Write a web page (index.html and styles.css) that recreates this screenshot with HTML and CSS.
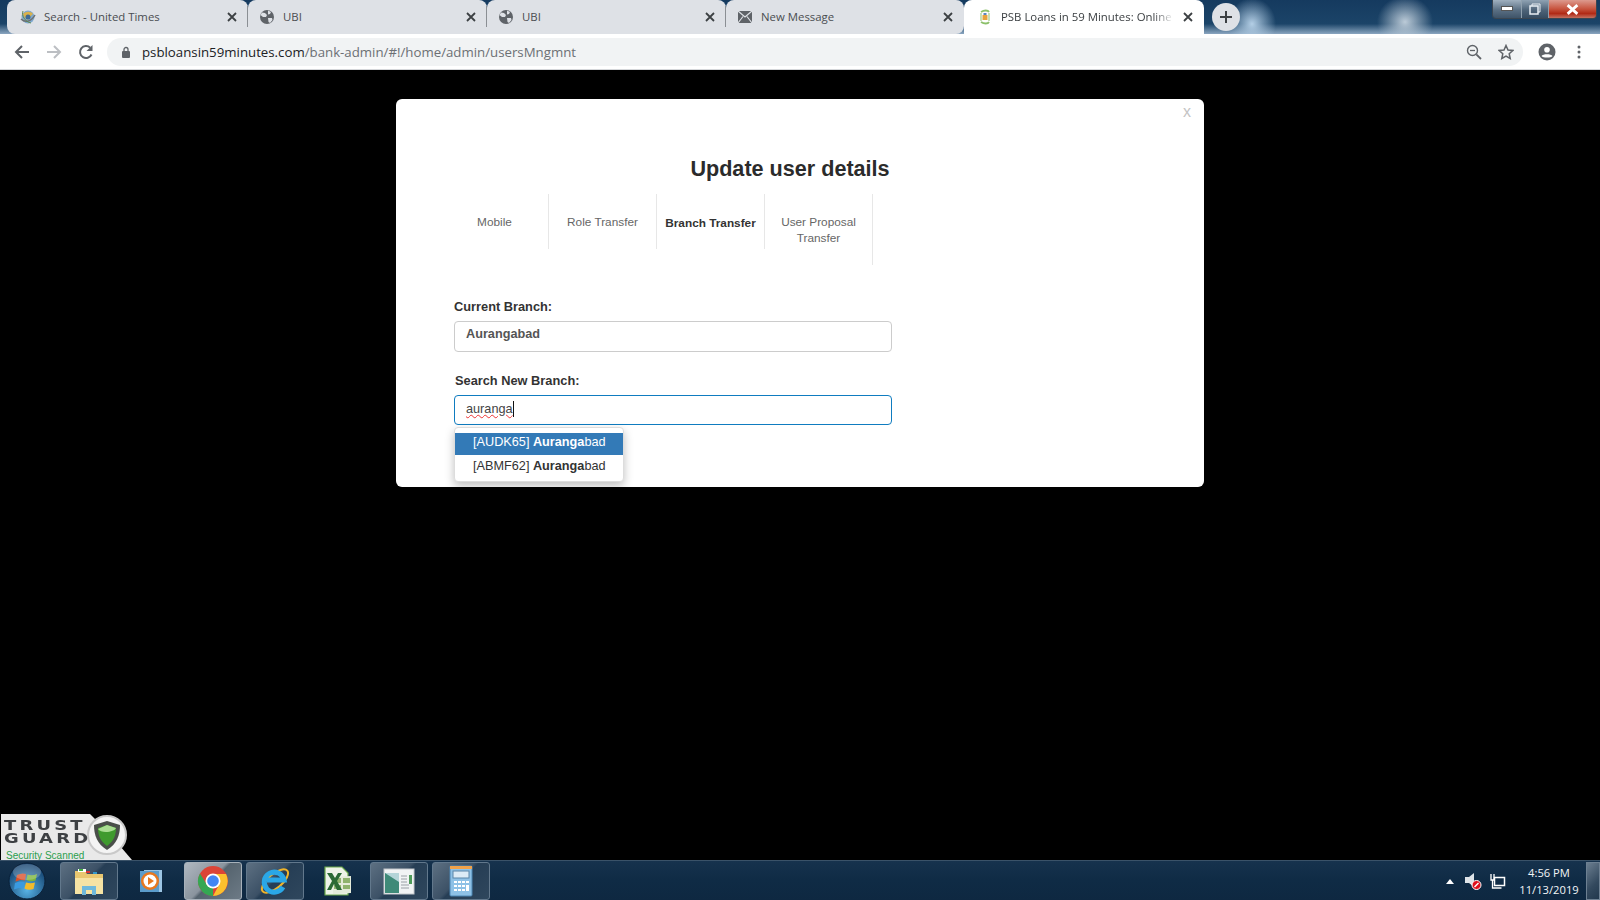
FILE: index.html
```html
<!DOCTYPE html>
<html lang="en">
<head>
	<meta charset="UTF-8">
	<title>PSB Loans in 59 Minutes</title>
	<link rel="stylesheet" href="styles.css">
</head>
<body>
	<svg class="defs" width="0" height="0">
		<symbol id="close" viewBox="0 0 12 12"><path d="M2 2l8 8M10 2l-8 8" fill="none" stroke="#3c4043" stroke-width="1.8"/></symbol>
		<symbol id="globe" viewBox="0 0 16 16"><circle cx="8" cy="8" r="7" fill="#5f6368"/><path d="M3 3.500l3 .5 2 2-1 2-3 0-2.500-2zM9 1.500l3 1.500-1 2-2 .5zM9 9l4 0 .5 2-2.500 3-1.500-1z" fill="#dee1e6"/></symbol>
	</svg>

	<div class="tabstrip">
		<div class="tab">
			<svg class="favicon" viewBox="0 0 16 16"><circle cx="8" cy="8" r="6.500" fill="#7fa9cf"/><path d="M3 5c3-3 8-3 10 0-2 1-3 4-5 6-2-1-4-3-5-6z" fill="#d9b24c"/><circle cx="8" cy="8" r="2.500" fill="#3d6a96"/><path d="M1 10c4 4 10 3 14-4" fill="none" stroke="#6d6f71" stroke-width="1.500"/><path d="M3 2c-2 4 2 11 8 12" fill="none" stroke="#5f8a4f"/></svg>
			<span class="tab-title">Search - United Times</span>
			<svg class="tab-close"><use href="#close"/></svg>
		</div>
		<div class="tab tab-b">
			<svg class="favicon"><use href="#globe"/></svg>
			<span class="tab-title">UBI</span>
			<svg class="tab-close"><use href="#close"/></svg>
		</div>
		<div class="tab tab-b">
			<svg class="favicon"><use href="#globe"/></svg>
			<span class="tab-title">UBI</span>
			<svg class="tab-close"><use href="#close"/></svg>
		</div>
		<div class="tab tab-c">
			<svg class="favicon" viewBox="0 0 16 16"><rect x="1" y="2" width="14" height="12" fill="#5f6368"/><path d="M1 2l7 6 7-6M1 14l5-6.500M15 14l-5-6.500" fill="none" stroke="#dee1e6" stroke-width="1.200"/></svg>
			<span class="tab-title">New Message</span>
			<svg class="tab-close"><use href="#close"/></svg>
		</div>
		<div class="tab tab-active">
			<svg class="favicon" viewBox="0 0 16 16"><path d="M4 3c3-2 7-2 8 0M4 13c3 2 7 2 8 0" fill="none" stroke="#8cc06a" stroke-width="1.800"/><path d="M4 4v8M12 4v8" stroke="#b7d59f" stroke-width="1.500"/><rect x="5.500" y="6" width="5" height="5" fill="#e7a33e"/><rect x="6.500" y="4" width="3" height="2" fill="#5a86c0"/></svg>
			<span class="tab-title tab-fade">PSB Loans in 59 Minutes: Online Loan</span>
			<svg class="tab-close"><use href="#close"/></svg>
		</div>
		<div class="newtab"><svg viewBox="0 0 14 14" width="14" height="14"><path d="M7 1v12M1 7h12" stroke="#3c4043" stroke-width="2"/></svg></div>
		<div class="wincontrols">
			<div class="winbtn winmin"><svg viewBox="0 0 12 6" width="12" height="6"><rect x="0.500" y="0.500" width="11" height="4" fill="#fff" stroke="#555"/></svg></div>
			<div class="winbtn winrestore"><svg viewBox="0 0 12 12" width="12" height="12"><path d="M3 3V1h8v8H9" fill="none" stroke="#e8eef3"/><rect x="1" y="3" width="8" height="8" fill="none" stroke="#e8eef3" stroke-width="1.500"/></svg></div>
			<div class="winbtn winclose"><svg viewBox="0 0 12 10" width="13" height="11"><path d="M1.500 1l9 8M10.500 1l-9 8" stroke="#fff" stroke-width="2.600"/></svg></div>
		</div>
	</div>

	<div class="toolbar">
		<div class="navbtn"><svg viewBox="0 0 16 16" width="16" height="16"><path d="M15 8H2M8 2L2 8l6 6" fill="none" stroke="#5f6368" stroke-width="2"/></svg></div>
		<div class="navbtn"><svg viewBox="0 0 16 16" width="16" height="16"><path d="M1 8h13M8 2l6 6-6 6" fill="none" stroke="#bcbfc3" stroke-width="2"/></svg></div>
		<div class="navbtn"><svg viewBox="0 0 16 16" width="16" height="16"><path d="M13.500 10.500A6 6 0 1 1 12.200 3.700" fill="none" stroke="#5f6368" stroke-width="2"/><path d="M14.500 1v6h-6z" fill="#5f6368"/></svg></div>
		<div class="omnibox">
			<svg class="lock" viewBox="0 0 10 12" width="10" height="12"><rect x="1" y="5" width="8" height="7" rx="1" fill="#5f6368"/><path d="M3 5V3.500a2 2 0 0 1 4 0V5" fill="none" stroke="#5f6368" stroke-width="1.300"/></svg>
			<span class="url"><span class="url-host">psbloansin59minutes.com</span>/bank-admin/#!/home/admin/usersMngmnt</span>
			<svg class="omni-icon" viewBox="0 0 16 16" width="16" height="16"><circle cx="6.500" cy="6.500" r="5" fill="none" stroke="#5f6368" stroke-width="1.400"/><path d="M10.300 10.300L15 15" stroke="#5f6368" stroke-width="1.800"/><path d="M4 6.500h5" stroke="#5f6368" stroke-width="1.300"/></svg>
			<svg class="omni-icon" viewBox="0 0 16 16" width="16" height="16"><path d="M8 1.500l2 4.500 4.800.5-3.600 3.200 1 4.800L8 12l-4.200 2.500 1-4.800L1.200 6.500 6 6z" fill="none" stroke="#5f6368" stroke-width="1.500"/></svg>
		</div>
		<div class="navbtn"><svg viewBox="0 0 18 18" width="18" height="18"><circle cx="9" cy="9" r="8.500" fill="#5f6368"/><circle cx="9" cy="6.800" r="2.800" fill="#fff"/><path d="M3.500 13c1.500-2.500 9.500-2.500 11 0-1.500 2-9.500 2-11 0z" fill="#fff"/></svg></div>
		<div class="navbtn"><svg viewBox="0 0 4 14" width="4" height="14"><circle cx="2" cy="2" r="1.500" fill="#5f6368"/><circle cx="2" cy="7" r="1.500" fill="#5f6368"/><circle cx="2" cy="12" r="1.500" fill="#5f6368"/></svg></div>
	</div>

	<div class="content">
		<div class="modal">
			<span class="modal-close">x</span>
			<h2 class="modal-title">Update user details</h2>
			<ul class="usertabs">
				<li class="usertab">Mobile</li>
				<li class="usertab">Role Transfer</li>
				<li class="usertab usertab-on">Branch Transfer</li>
				<li class="usertab usertab-tall">User Proposal Transfer</li>
			</ul>
			<div class="form">
				<label class="form-label">Current Branch:</label>
				<div class="field field-ro">Aurangabad</div>
				<label class="form-label form-label-b">Search New Branch:</label>
				<div class="field field-focus"><span class="typed">auranga</span></div>
				<ul class="suggest">
					<li class="suggest-item suggest-on">[AUDK65] <b>Auranga</b>bad</li>
					<li class="suggest-item">[ABMF62] <b>Auranga</b>bad</li>
				</ul>
			</div>
		</div>

		<div class="trust">
			<svg class="trust-bg" viewBox="0 0 132 46" width="132" height="46">
				<path d="M1 0H90L108 18 132 46H1z" fill="#e9e9e9"/>
				<circle cx="107" cy="21" r="19" fill="#f4f4f4" stroke="#c9c9c9" stroke-width="2"/>
				<path d="M107 7l13 4c0 10-3 19-13 25-10-6-13-15-13-25z" fill="#4a4f4a"/>
				<path d="M107 11l9 3c0 7-2 13-9 18-7-5-9-11-9-18z" fill="#3f9a2e"/>
				<path d="M98 15l9-4 9 3c-1 4-15 6-18 1z" fill="#a9dd92"/>
			</svg>
			<div class="trust-word">TRUST</div>
			<div class="trust-word">GUARD</div>
			<div class="trust-scan">Security Scanned</div>
		</div>
	</div>

	<div class="taskbar">
		<div class="startorb">
			<svg viewBox="0 0 38 38" width="38" height="38">
				<defs><radialGradient id="orb" cx="50%" cy="75%" r="75%"><stop offset="0" stop-color="#58b3e6"/><stop offset="1" stop-color="#0d3763"/></radialGradient></defs>
				<circle cx="19" cy="19" r="18" fill="url(#orb)" stroke="#0a2038"/>
				<path d="M9 13c3-1.500 6-2 9-1l-1 6.500c-3-1-6-.5-9.500 1z" fill="#d9502a"/>
				<path d="M19.500 12.500c3 1 6 1 9.500-.5l-1.500 6.500c-3 1-6 1-9-.5z" fill="#7cb53a"/>
				<path d="M7 21c3-1.500 6-2 9.500-1l-1 6.500c-3-1-6-.5-9.500 1z" fill="#3a9ae0"/>
				<path d="M18 20.500c3 1 6 1 9 0l-1.500 6.500c-3 1-6 1-9-.5z" fill="#f2bb2c"/>
				<ellipse cx="19" cy="10" rx="14" ry="8" fill="#fff" opacity=".22"/>
			</svg>
		</div>
		<div class="apps">
			<div class="app app-open">
				<svg viewBox="0 0 32 32" width="32" height="32"><path d="M2 6h10l2 3h16v20H2z" fill="#e9c770"/><path d="M5 4h8v3H5z" fill="#fff"/><rect x="6" y="4" width="4" height="2" fill="#3fae3f"/><rect x="13" y="6" width="4" height="2" fill="#d33"/><rect x="20" y="7" width="4" height="2" fill="#39c"/><path d="M2 13h28v16H2z" fill="#f6e3a4"/><path d="M9 21h14v9h-4v-5h-6v5H9z" fill="#6fb9dc"/></svg>
			</div>
			<div class="app">
				<svg viewBox="0 0 28 28" width="28" height="28"><rect x="7" y="3" width="18" height="22" fill="#9cc5e4"/><rect x="3" y="4" width="19" height="21" fill="#5b9ccb"/><circle cx="13" cy="14" r="9" fill="#e8781f"/><circle cx="13" cy="14" r="6.500" fill="#fff"/><path d="M11 10l6 4-6 4z" fill="#e8781f"/></svg>
			</div>
			<div class="app app-open app-active">
				<svg viewBox="0 0 32 32" width="32" height="32">
					<circle cx="16" cy="16" r="15" fill="#db4437"/>
					<path d="M16 16L3 23.500A15 15 0 0 0 16 31z" fill="#34a853"/>
					<path d="M3 23.500A15 15 0 0 1 3 8.500L10 20z" fill="#34a853"/>
					<path d="M16 9h13a15 15 0 0 1-13 22l7-13z" fill="#fbc02d"/>
					<circle cx="16" cy="16" r="7.500" fill="#fff"/>
					<circle cx="16" cy="16" r="5.800" fill="#4285f4"/>
				</svg>
			</div>
			<div class="app app-open">
				<svg viewBox="0 0 34 34" width="34" height="34"><ellipse cx="17" cy="17" rx="16" ry="7" transform="rotate(-40 17 17)" fill="none" stroke="#f0b429" stroke-width="2"/><path d="M25 23a10 10 0 1 1 1-7H9" fill="none" stroke="#2aa7e6" stroke-width="5"/></svg>
			</div>
			<div class="app">
				<svg viewBox="0 0 32 32" width="32" height="32"><path d="M4 2h17l6 6v22H4z" fill="#eef3e8" stroke="#6aa84a" stroke-width="1.200"/><path d="M12 12l18-1v17l-18 1z" fill="#e4ebda"/><path d="M13 13h7v5h-7zM22 13h7v5h-7zM13 20h7v4h-7zM22 20h7v4h-7z" fill="#8fb36e"/><path d="M6 8l5 0 3 5 3-5 4 0-5 8 5 9-5 0-3-6-3 6-4 0 5-9z" fill="#2b6a35"/></svg>
			</div>
			<div class="app app-open">
				<svg viewBox="0 0 32 28" width="32" height="28"><rect x="1" y="2" width="30" height="25" fill="#f1f3f4" stroke="#c4c8cc"/><rect x="2" y="6" width="14" height="20" fill="#3f8a78"/><path d="M2 6h14v9z" fill="#b4d4d8"/><path d="M18 9h6M18 12h6M18 15h6M18 18h8M18 21h8" stroke="#9aa0a6"/><rect x="26" y="8" width="3" height="9" fill="#4e9a5a"/></svg>
			</div>
			<div class="app app-open">
				<svg viewBox="0 0 24 32" width="24" height="32"><rect x="1" y="1" width="22" height="30" rx="1" fill="#8ec1e6" stroke="#4d86b3"/><rect x="1" y="1" width="22" height="3" fill="#f0a24a"/><rect x="4" y="6" width="16" height="7" fill="#dcebf6" stroke="#5a86a8"/><path d="M5 16h3v2H5zM9 16h3v2H9zM13 16h3v2h-3zM17 16h3v2h-3zM5 20h3v2H5zM9 20h3v2H9zM13 20h3v2h-3zM17 20h3v6h-3zM5 24h3v2H5zM9 24h3v2H9zM13 24h3v2h-3z" fill="#fff"/></svg>
			</div>
		</div>
		<div class="tray">
			<svg class="tray-icon tray-arrow" viewBox="0 0 10 6" width="8" height="5"><path d="M5 0l5 6H0z" fill="#fff"/></svg>
			<svg class="tray-icon" viewBox="0 0 18 18" width="18" height="18"><path d="M1 5h4l5-4v14l-5-4H1z" fill="#dfe4e8"/><circle cx="12.500" cy="13" r="4.500" fill="#e0101c" stroke="#fff"/><path d="M10.500 15l4-4" stroke="#fff" stroke-width="1.500"/></svg>
			<svg class="tray-icon" viewBox="0 0 16 16" width="16" height="16"><rect x="4.500" y="4.500" width="10" height="8" fill="none" stroke="#fff" stroke-width="1.500"/><path d="M1 1v6h3V1M2.500 7v8h9" fill="none" stroke="#fff" stroke-width="1.300"/></svg>
			<div class="clock">
				<div>4:56 PM</div>
				<div>11/13/2019</div>
			</div>
			<div class="showdesk"></div>
		</div>
	</div>
</body>
</html>
```

FILE: styles.css
```css
html, body {
	margin: 0;
	padding: 0;
	height: 100%;
	overflow: hidden;
	background: #000;
}
body {
	display: flex;
	flex-direction: column;
	height: 900px;
	font-family: "Liberation Sans", Arial, sans-serif;
}
ul {
	margin: 0;
	padding: 0;
	list-style: none;
}
.defs {
	position: absolute;
}

/* browser tabs */
.tabstrip {
	display: flex;
	align-items: flex-start;
	flex: none;
	height: 34px;
	padding-left: 7px;
	box-sizing: border-box;
	background:
		radial-gradient(ellipse 24px 26px at 1252px 24px, #b4cfe6 0, rgba(180,207,230,0) 100%),
		radial-gradient(ellipse 28px 26px at 1405px 22px, #bccbd8 0, rgba(188,203,216,0) 100%),
		linear-gradient(to bottom, #153a5f 0, #1b4468 70%, #8ba6c0 100%);
}
.tab {
	display: flex;
	align-items: center;
	flex: none;
	box-sizing: border-box;
	width: 241px;
	height: 34px;
	padding: 0 10px 0 13px;
	background: #dee1e6;
	border-radius: 8px 8px 0 0;
	font-family: "Open Sans", sans-serif;
	font-size: 11.400px;
	color: #4a4d51;
	position: relative;
}
.tab:first-child {
	border-radius: 8px 8px 0 8px;
}
.tab::after {
	content: "";
	position: absolute;
	right: 0;
	top: 6px;
	width: 1px;
	height: 21px;
	background: #8b8f94;
}
.tab-b {
	width: 239px;
	padding-left: 11px;
}
.tab-c {
	width: 238px;
	padding-left: 11px;
	border-radius: 8px 8px 8px 0;
}
.tab-c::after, .tab-active::after {
	display: none;
}
.tab-active {
	width: 240px;
	background: #fff;
	color: #3c4043;
}
.favicon {
	flex: none;
	width: 16px;
	height: 16px;
	margin-right: 8px;
}
.tab-title {
	flex: 1;
	padding-bottom: 2px;
	overflow: hidden;
	white-space: nowrap;
}
.tab-fade {
	margin-right: 8px;
	-webkit-mask-image: linear-gradient(to right, #000 88%, transparent 100%);
	mask-image: linear-gradient(to right, #000 88%, transparent 100%);
}
.tab-close {
	flex: none;
	width: 12px;
	height: 12px;
}
.newtab {
	display: flex;
	align-items: center;
	justify-content: center;
	flex: none;
	width: 28px;
	height: 28px;
	margin: 3px 0 0 8px;
	border-radius: 50%;
	background: #dee1e6;
}
.wincontrols {
	display: flex;
	flex: none;
	height: 18px;
	margin-left: auto;
	margin-right: 3px;
	border: 1px solid #3b4651;
	border-top: none;
	border-radius: 0 0 4px 4px;
	overflow: hidden;
}
.winbtn {
	display: flex;
	align-items: center;
	justify-content: center;
	height: 100%;
	border-right: 1px solid #8fa0ae;
}
.winmin {
	width: 28px;
	background: linear-gradient(to bottom, #9fb0bf 0, #5b7084 55%, #3e5368 100%);
}
.winrestore {
	width: 26px;
	background: linear-gradient(to bottom, #8fa2b3 0, #4e6479 55%, #364c61 100%);
}
.winclose {
	width: 47px;
	border-right: none;
	background: linear-gradient(to bottom, #dd9a8e 0, #c7533d 50%, #b12a16 75%, #c4705f 100%);
}

/* address bar */
.toolbar {
	display: flex;
	align-items: center;
	flex: none;
	box-sizing: border-box;
	height: 36px;
	padding: 0 5px 0 6px;
	background: #fff;
	border-bottom: 1px solid #d5d7da;
}
.navbtn {
	display: flex;
	align-items: center;
	justify-content: center;
	flex: none;
	width: 32px;
}
.omnibox {
	display: flex;
	align-items: center;
	flex: 1;
	height: 28px;
	margin: 0 8px 0 5px;
	padding: 0 9px 0 14px;
	background: #f1f3f4;
	border-radius: 14px;
}
.lock {
	flex: none;
	margin-right: 11px;
}
.url {
	flex: 1;
	font-family: "Open Sans", sans-serif;
	font-size: 13.250px;
	color: #6c7074;
	white-space: nowrap;
}
.url-host {
	color: #202124;
}
.omni-icon {
	flex: none;
	margin-left: 16px;
}

/* page */
.content {
	flex: 1;
	position: relative;
	overflow: hidden;
	background: #000;
}
.modal {
	position: relative;
	box-sizing: border-box;
	width: 808px;
	height: 388px;
	margin: 29px auto 0;
	padding: 0 64px 0 44px;
	background: #fff;
	border-radius: 6px;
}
.modal-close {
	position: absolute;
	top: 4px;
	right: 13px;
	font-size: 16px;
	color: #c4c4c4;
}
.modal-title {
	margin: 0;
	padding-top: 57px;
	font-size: 21.600px;
	line-height: 26px;
	font-weight: bold;
	text-align: center;
	color: #2b2b2b;
}
.usertabs {
	display: flex;
	align-items: flex-start;
	margin-top: 12px;
	padding-left: 1px;
}
.usertab {
	box-sizing: border-box;
	width: 108px;
	height: 55px;
	padding: 20px 6px 0;
	border-right: 1px solid #e7e7e7;
	font-size: 11.800px;
	line-height: 16px;
	text-align: center;
	color: #666;
}
.usertab-on {
	padding-top: 21px;
	font-weight: bold;
	color: #333;
	white-space: nowrap;
	padding-left: 0;
	padding-right: 0;
}
.usertab-tall {
	height: 71px;
	padding-left: 12px;
	padding-right: 12px;
}
.form {
	position: relative;
	width: 438px;
	margin: 33px 0 0 14px;
}
.form-label {
	display: block;
	height: 18px;
	font-size: 12.800px;
	line-height: 18px;
	font-weight: bold;
	color: #333;
}
.form-label-b {
	margin: 20px 0 0 1px;
}
.field {
	box-sizing: border-box;
	width: 438px;
	height: 31px;
	margin-top: 5px;
	padding: 0 11px;
	border: 1px solid #ccc;
	border-radius: 4px;
	font-size: 12.700px;
	line-height: 25px;
	color: #555;
}
.field-ro {
	font-weight: bold;
}
.field-focus {
	height: 30px;
	margin-top: 5px;
	border-color: #0f7cc0;
	line-height: 27px;
	color: #444;
}
.typed {
	display: inline-block;
	line-height: 16px;
	border-right: 1px solid #111;
	text-decoration: underline wavy #e33 1px;
}
.suggest {
	position: absolute;
	left: 0;
	top: 129px;
	box-sizing: border-box;
	width: 170px;
	height: 55px;
	padding: 5px 0;
	background: #fff;
	border: 1px solid #ddd;
	border-radius: 4px;
	box-shadow: 0 4px 10px rgba(0,0,0,.25);
}
.suggest-item {
	height: 23px;
	padding-left: 18px;
	font-size: 12.700px;
	line-height: 23px;
	color: #333;
	white-space: nowrap;
}
.suggest-on {
	height: 22px;
	line-height: 19px;
	background: #337ab7;
	color: #fff;
}

/* trust guard badge */
.trust {
	position: absolute;
	left: 0;
	bottom: 0;
	width: 132px;
	height: 46px;
	padding: 5px 0 0 4px;
	box-sizing: border-box;
	overflow: hidden;
}
.trust-bg {
	position: absolute;
	left: 0;
	top: 0;
}
.trust-word {
	position: relative;
	height: 13px;
	font-family: "DejaVu Sans", sans-serif;
	font-size: 14px;
	line-height: 13px;
	font-weight: bold;
	letter-spacing: 2.500px;
	color: #3d4043;
	transform: scaleX(1.280);
	transform-origin: left center;
}
.trust-scan {
	position: relative;
	margin: 4px 0 0 2px;
	font-size: 10px;
	line-height: 13px;
	color: #2c9f4e;
	white-space: nowrap;
}

/* windows taskbar */
.taskbar {
	display: flex;
	align-items: stretch;
	flex: none;
	box-sizing: border-box;
	height: 40px;
	padding-top: 1px;
	background: linear-gradient(to bottom, #16324d 0, #0f2b45 50%, #0e2841 100%);
	border-top: 1px solid #3a5268;
}
.startorb {
	display: flex;
	align-items: center;
	justify-content: center;
	flex: none;
	width: 54px;
}
.apps {
	display: flex;
	gap: 4px;
	margin-left: 6px;
}
.app {
	display: flex;
	align-items: center;
	justify-content: center;
	flex: none;
	box-sizing: border-box;
	width: 58px;
	border: 1px solid transparent;
	border-radius: 3px;
}
.app-open {
	border-color: #62788c;
	background: linear-gradient(135deg, #5d7082 0, #3c5166 45%, #263e55 50%, #2f475d 100%);
}
.app-active {
	border-color: #a7b1ba;
	background: linear-gradient(135deg, #b0b8c0 0, #8a949e 45%, #56646f 50%, #6d7a86 100%);
}
.tray {
	display: flex;
	align-items: center;
	flex: none;
	margin-left: auto;
}
.tray-icon {
	flex: none;
	margin-right: 8px;
}
.tray-arrow {
	margin-right: 10px;
}
.clock {
	width: 70px;
	margin-right: 2px;
	font-family: "Open Sans", sans-serif;
	font-size: 11.200px;
	line-height: 17px;
	text-align: center;
	color: #f3f5f7;
}
.showdesk {
	align-self: stretch;
	box-sizing: border-box;
	width: 14px;
	border: 1px solid #6d8092;
	background: linear-gradient(135deg, #6b7e90 0, #33495e 60%, #22384d 100%);
}
```
